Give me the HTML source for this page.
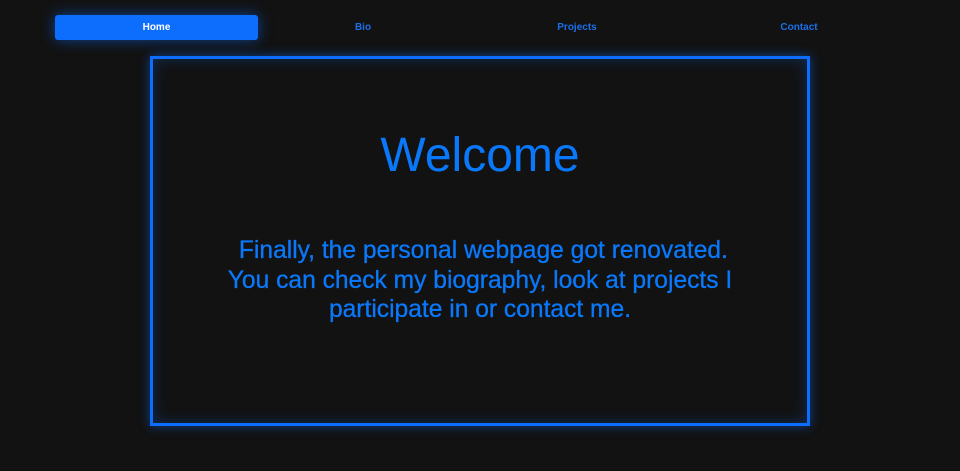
<!DOCTYPE html>
<html><head><meta charset="utf-8"><style>
html,body{margin:0;padding:0;background:#121212;width:960px;height:471px;overflow:hidden;font-family:"Liberation Sans",sans-serif}
.nav a{position:absolute;top:15px;height:25px;line-height:25px;font-size:10px;font-weight:bold;color:#1a6fe8;text-align:center;text-decoration:none}
.home{left:55px;width:203px;background:#0d6efd;color:#fff!important;border-radius:3px;box-shadow:0 0 14px rgba(13,110,253,.55)}
.box{position:absolute;left:150px;top:56px;width:654px;height:364px;border:3px solid #0d6efd;box-shadow:0 0 10px rgba(13,110,253,.5),inset 0 0 14px rgba(13,110,253,.3)}
h1{position:absolute;left:0;right:0;top:128px;margin:0;text-align:center;font-size:48px;font-weight:normal;color:#0a78fa}
p{position:absolute;left:0;right:0;top:236px;margin:0;text-align:center;font-size:24.6px;line-height:29.5px;color:#0a78fa;-webkit-text-stroke:0.3px #0a78fa}
</style></head><body>
<div class="nav">
<a class="home">Home</a>
<a style="left:313px;width:100px">Bio</a>
<a style="left:527px;width:100px">Projects</a>
<a style="left:749px;width:100px">Contact</a>
</div>
<div class="box"></div>
<h1>Welcome</h1>
<p>&nbsp;Finally, the personal webpage got renovated.<br>You can check my biography, look at projects I<br>participate in or contact me.</p>
</body></html>
